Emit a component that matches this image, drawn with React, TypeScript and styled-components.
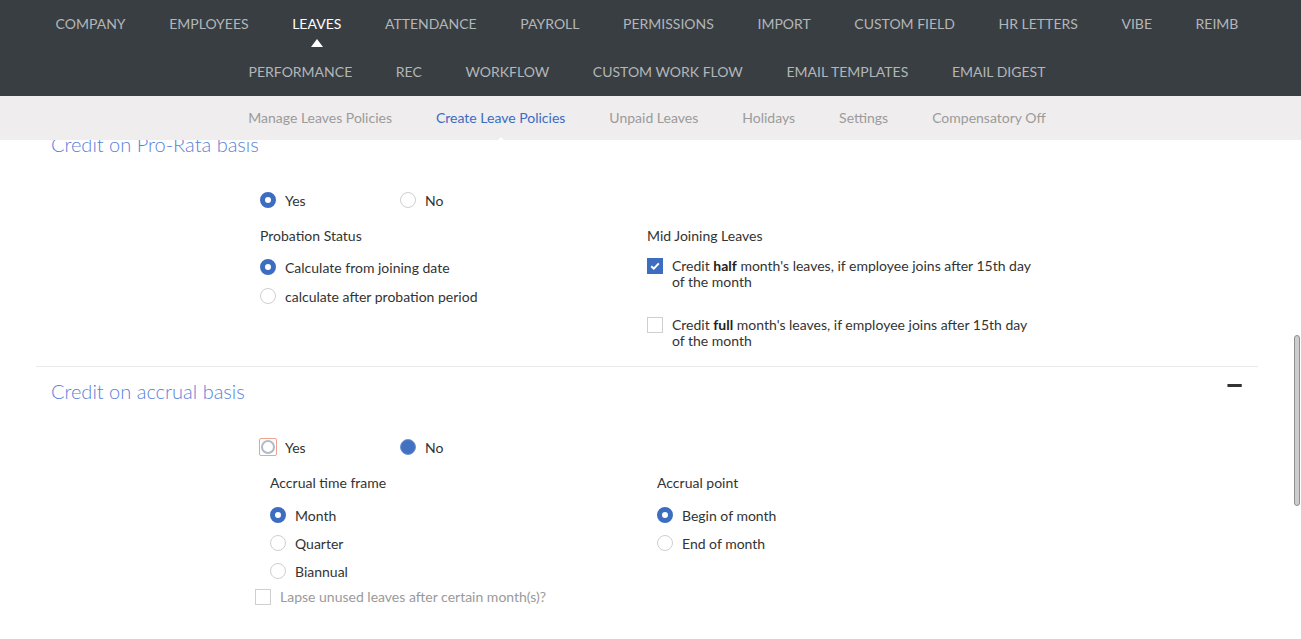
import React from "react";
import styled, { createGlobalStyle, css } from "styled-components";

const GlobalStyle = createGlobalStyle`
  html, body { margin: 0; padding: 0; background: #fff; }
  body { font-family: Lato, "Open Sans", Arial, sans-serif; color: #333; overflow: hidden; }
  * { box-sizing: border-box; }
`;

const Page = styled.div`
  position: relative;
  width: 1301px;
  height: 639px;
  overflow: hidden;
  background: #fff;
`;

const FixedHeader = styled.header`
  position: absolute;
  top: 0;
  left: 0;
  right: 0;
  z-index: 5;
`;

const TopNav = styled.nav`
  background: #393e42;
  height: 96px;
  padding-right: 7px;
  display: flex;
  flex-direction: column;
`;

const NavRow = styled.ul`
  list-style: none;
  margin: 0;
  padding: 0;
  height: 48px;
  display: flex;
  justify-content: center;
  align-items: center;
  gap: 43.6px;
`;

const NavItem = styled.li<{ $active?: boolean }>`
  position: relative;
  font-size: 14px;
  line-height: 18px;
  text-transform: uppercase;
  color: ${(p) => (p.$active ? "#ffffff" : "#b3b6b9")};
  white-space: nowrap;
  ${(p) =>
    p.$active &&
    css`
      &::after {
        content: "";
        position: absolute;
        left: 50%;
        top: 24px;
        margin-left: -6px;
        border-left: 6px solid transparent;
        border-right: 6px solid transparent;
        border-bottom: 8px solid #fff;
      }
    `}
`;

const SubNav = styled.ul`
  list-style: none;
  margin: 0;
  padding: 0 7px 0 0;
  height: 44px;
  background: #efeded;
  display: flex;
  justify-content: center;
  align-items: center;
  gap: 44px;
`;

const SubItem = styled.li<{ $active?: boolean }>`
  position: relative;
  font-size: 14px;
  line-height: 18px;
  color: ${(p) => (p.$active ? "#3b6cc2" : "#9b9b9b")};
  white-space: nowrap;
  ${(p) =>
    p.$active &&
    css`
      &::after {
        content: "";
        position: absolute;
        left: 50%;
        top: 28px;
        margin-left: -7px;
        border-left: 7px solid transparent;
        border-right: 7px solid transparent;
        border-bottom: 7px solid #fff;
      }
    `}
`;

const Content = styled.main`
  padding: 120px 43px 0 36px;
`;

const Section = styled.section`
  border-bottom: 1px solid #e9e9e9;
  padding-bottom: 17px;
  &:last-child {
    padding-bottom: 60px;
  }
`;

const SectionHead = styled.div`
  display: flex;
  justify-content: space-between;
  align-items: center;
  padding: 12px 16px 1px 15px;
  height: 37px;
`;

const SectionTitle = styled.h2`
  margin: 0;
  font-size: 20px;
  line-height: 24px;
  font-weight: 300;
  color: #5a7fd8;
`;

const Collapse = styled.span`
  display: block;
  width: 15px;
  height: 3px;
  background: #333;
  border-left: 1px solid #c87a3a;
  border-right: 1px solid #3b6cc2;
  margin-top: -12px;
`;

const Body = styled.div`
  padding: 33px 0 0 224px;
`;

const ChoiceRow = styled.div`
  display: flex;
  height: 20px;
  align-items: center;
`;

const Columns = styled.div<{ $inset?: boolean }>`
  display: grid;
  grid-template-columns: 387px 387px;
  margin-top: 18px;
  padding-left: ${(p) => (p.$inset ? "10px" : "0")};
`;

const Column = styled.div`
  display: flex;
  flex-direction: column;
`;

const FieldLabel = styled.div<{ $space: number }>`
  font-size: 14px;
  line-height: 16px;
  color: #333;
  margin-bottom: ${(p) => p.$space}px;
`;

const RadioList = styled.div<{ $gap: number }>`
  display: flex;
  flex-direction: column;
  gap: ${(p) => p.$gap}px;
`;

const RadioLabel = styled.label<{ $width?: number }>`
  display: flex;
  align-items: center;
  height: 20px;
  width: ${(p) => (p.$width ? `${p.$width}px` : "auto")};
  font-size: 14px;
  color: #333;
  gap: 9px;
`;

type RadioKind = "checked" | "empty" | "filled" | "focused";

const RadioCircle = styled.span<{ $kind: RadioKind }>`
  display: inline-block;
  flex: none;
  width: 16px;
  height: 16px;
  border-radius: 50%;
  background: #fff;
  ${(p) =>
    p.$kind === "checked" &&
    css`
      border: 5px solid #3d6dc1;
    `}
  ${(p) =>
    p.$kind === "empty" &&
    css`
      border: 1px solid #cfcfcf;
    `}
  ${(p) =>
    p.$kind === "filled" &&
    css`
      background: #4371c2;
      border: 1px solid #6f93d2;
    `}
  ${(p) =>
    p.$kind === "focused" &&
    css`
      width: 14px;
      height: 14px;
      border: 2px solid #b0bacb;
    `}
`;

const FocusRing = styled.span`
  display: inline-flex;
  flex: none;
  align-items: center;
  justify-content: center;
  width: 18px;
  height: 18px;
  margin-left: -1px;
  margin-right: -1px;
  border: 1px solid #eea391;
  border-radius: 2px;
`;

const CheckList = styled.div`
  display: flex;
  flex-direction: column;
  gap: 27px;
`;

const CheckLabel = styled.label<{ $muted?: boolean }>`
  display: flex;
  align-items: flex-start;
  gap: 9px;
  font-size: 14px;
  line-height: 16px;
  color: ${(p) => (p.$muted ? "#9a9a9a" : "#333")};
  b { font-weight: 700; color: #222; }
`;

const CheckText = styled.span`
  max-width: 366px;
`;

const Box = styled.span<{ $checked?: boolean }>`
  display: inline-flex;
  flex: none;
  align-items: center;
  justify-content: center;
  width: 16px;
  height: 16px;
  border: 1px solid ${(p) => (p.$checked ? "#3d6dc1" : "#cfcfcf")};
  background: ${(p) => (p.$checked ? "#3d6dc1" : "#fff")};
`;

const LapseRow = styled.div`
  margin: 8px 0 0 -5px;
`;

const Thumb = styled.div`
  position: absolute;
  right: 1px;
  top: 335px;
  width: 6px;
  height: 171px;
  border-radius: 3px;
  background: #cdcdcd;
  border: 1px solid #8f8f8f;
`;

const Radio = ({ kind, label, width }: { kind: RadioKind; label: string; width?: number }) => (
  <RadioLabel $width={width}>
    {kind === "focused" ? (
      <FocusRing>
        <RadioCircle $kind="focused" />
      </FocusRing>
    ) : (
      <RadioCircle $kind={kind} />
    )}
    {label}
  </RadioLabel>
);

const Check = ({ checked, children, muted }: { checked?: boolean; children: React.ReactNode; muted?: boolean }) => (
  <CheckLabel $muted={muted}>
    <Box $checked={checked}>
      {checked && (
        <svg width="10" height="8" viewBox="0 0 10 8">
          <path d="M1.2 4.2 L3.8 6.6 L8.8 1.4" stroke="#fff" strokeWidth="2" fill="none" />
        </svg>
      )}
    </Box>
    <CheckText>{children}</CheckText>
  </CheckLabel>
);

const row1 = ["Company", "Employees", "Leaves", "Attendance", "Payroll", "Permissions", "Import", "Custom Field", "HR Letters", "Vibe", "Reimb"];
const row2 = ["Performance", "Rec", "Workflow", "Custom Work Flow", "Email Templates", "Email Digest"];
const subs = ["Manage Leaves Policies", "Create Leave Policies", "Unpaid Leaves", "Holidays", "Settings", "Compensatory Off"];

export default function App() {
  return (
    <Page>
      <GlobalStyle />
      <FixedHeader>
        <TopNav>
          <NavRow>
            {row1.map((n) => (
              <NavItem key={n} $active={n === "Leaves"}>{n}</NavItem>
            ))}
          </NavRow>
          <NavRow>
            {row2.map((n) => (
              <NavItem key={n}>{n}</NavItem>
            ))}
          </NavRow>
        </TopNav>
        <SubNav>
          {subs.map((s) => (
            <SubItem key={s} $active={s === "Create Leave Policies"}>{s}</SubItem>
          ))}
        </SubNav>
      </FixedHeader>

      <Content>
        <Section>
          <SectionHead>
            <SectionTitle>Credit on Pro-Rata basis</SectionTitle>
            <Collapse />
          </SectionHead>
          <Body>
            <ChoiceRow>
              <Radio kind="checked" label="Yes" width={140} />
              <Radio kind="empty" label="No" />
            </ChoiceRow>
            <Columns>
              <Column>
                <FieldLabel $space={13}>Probation Status</FieldLabel>
                <RadioList $gap={9}>
                  <Radio kind="checked" label="Calculate from joining date" />
                  <Radio kind="empty" label="calculate after probation period" />
                </RadioList>
              </Column>
              <Column>
                <FieldLabel $space={14}>Mid Joining Leaves</FieldLabel>
                <CheckList>
                  <Check checked>
                    Credit <b>half</b> month's leaves, if employee joins after 15th day of the month
                  </Check>
                  <Check>
                    Credit <b>full</b> month's leaves, if employee joins after 15th day of the month
                  </Check>
                </CheckList>
              </Column>
            </Columns>
          </Body>
        </Section>

        <Section>
          <SectionHead>
            <SectionTitle>Credit on accrual basis</SectionTitle>
            <Collapse />
          </SectionHead>
          <Body>
            <ChoiceRow>
              <Radio kind="focused" label="Yes" width={140} />
              <Radio kind="filled" label="No" />
            </ChoiceRow>
            <Columns $inset>
              <Column>
                <FieldLabel $space={14}>Accrual time frame</FieldLabel>
                <RadioList $gap={8}>
                  <Radio kind="checked" label="Month" />
                  <Radio kind="empty" label="Quarter" />
                  <Radio kind="empty" label="Biannual" />
                </RadioList>
              </Column>
              <Column>
                <FieldLabel $space={14}>Accrual point</FieldLabel>
                <RadioList $gap={8}>
                  <Radio kind="checked" label="Begin of month" />
                  <Radio kind="empty" label="End of month" />
                </RadioList>
              </Column>
            </Columns>
            <LapseRow>
              <Check muted>Lapse unused leaves after certain month(s)?</Check>
            </LapseRow>
          </Body>
        </Section>
      </Content>
      <Thumb />
    </Page>
  );
}
